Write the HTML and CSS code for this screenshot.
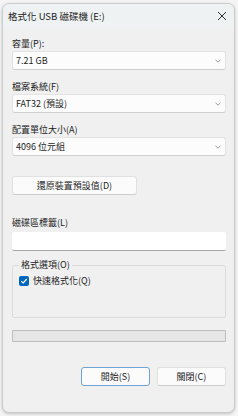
FILE: index.html
```html
<!DOCTYPE html>
<html>
  <head>
    <title>格式化 USB 磁碟機 (E:)</title>
    <link rel="stylesheet" href="styles.css">
  </head>
  <body>
    <div class="window">

      <div class="titlebar">
        <span class="title">格式化 USB 磁碟機 (E:)</span>
        <svg class="close" width="10" height="10" viewBox="0 0 10 10">
          <path d="M1 1 L9 9 M9 1 L1 9" stroke="#2b2b2b" stroke-width="1" fill="none"/>
        </svg>
      </div>

      <div class="content">

        <div class="field">
          <div class="label">容量(P):</div>
          <div class="combo">
            <span>7.21 GB</span>
            <svg class="chevron" width="6" height="4" viewBox="0 0 6 4"><path d="M0.5 0.8 L3 3.2 L5.5 0.8" stroke="#9a9a9a" fill="none"/></svg>
          </div>
        </div>

        <div class="field">
          <div class="label">檔案系統(F)</div>
          <div class="combo">
            <span>FAT32 (預設)</span>
            <svg class="chevron" width="6" height="4" viewBox="0 0 6 4"><path d="M0.5 0.8 L3 3.2 L5.5 0.8" stroke="#9a9a9a" fill="none"/></svg>
          </div>
        </div>

        <div class="field">
          <div class="label">配置單位大小(A)</div>
          <div class="combo">
            <span>4096 位元組</span>
            <svg class="chevron" width="6" height="4" viewBox="0 0 6 4"><path d="M0.5 0.8 L3 3.2 L5.5 0.8" stroke="#9a9a9a" fill="none"/></svg>
          </div>
        </div>

        <button class="btn btn-restore">還原裝置預設值(D)</button>

        <div class="field field-volume">
          <div class="label">磁碟區標籤(L)</div>
          <div class="textbox"></div>
        </div>

        <fieldset class="group">
          <legend>格式選項(O)</legend>
          <label class="check">
            <span class="box">
              <svg width="8" height="8" viewBox="0 0 8 8"><path d="M1.3 4.2 L3.2 6 L6.8 2" stroke="white" stroke-width="1.2" fill="none"/></svg>
            </span>
            快速格式化(Q)
          </label>
        </fieldset>

        <div class="progress"></div>

        <div class="actions">
          <button class="btn btn-default">開始(S)</button>
          <button class="btn">關閉(C)</button>
        </div>

      </div>
    </div>
  </body>
</html>
```

FILE: styles.css
```css
body {
  margin: 0;
  background-color: #f4f4f4;
  font-family: "Noto Sans CJK TC", "Noto Sans", sans-serif;
  font-size: 9px;
  color: #1c1c1c;
}

.window {
  box-sizing: border-box;
  width: 233px;
  height: 410px;
  margin: 3px 2px;
  border: 1px solid #cbcbcb;
  border-radius: 7px;
  background-color: #f0f0f0;
  box-shadow: 0 1px 3px rgba(0, 0, 0, 0.2);
  overflow: hidden;
}

.titlebar {
  height: 23px;
  display: flex;
  align-items: center;
  justify-content: space-between;
  padding: 0 7px 0 5px;
  background-color: #eef2f2;
}

.title {
  font-size: 9.5px;
}

.content {
  padding: 10px 8px 0 9px;
}

.field {
  margin-top: 10px;
}
.field:first-child {
  margin-top: 0;
}

.label {
  line-height: 14px;
}

.combo {
  box-sizing: border-box;
  height: 19px;
  display: flex;
  align-items: center;
  justify-content: space-between;
  padding: 0 4px 0 3px;
  background-color: #fcfcfc;
  border: 1px solid #e3e3e3;
  border-bottom-color: #cfcfcf;
  border-radius: 3px;
}

.btn {
  box-sizing: border-box;
  height: 19px;
  padding: 0;
  font-family: inherit;
  font-size: 9px;
  color: #1c1c1c;
  background-color: #fbfbfb;
  border: 1px solid #e0e0e0;
  border-bottom-color: #cdcdcd;
  border-radius: 3px;
}

.btn-restore {
  display: block;
  width: 125px;
  margin-top: 20px;
}

.field-volume {
  margin-top: 21px;
}

.textbox {
  box-sizing: border-box;
  height: 19px;
  margin-top: 2px;
  background-color: #ffffff;
  border-bottom: 1px solid #a8a8a8;
  border-radius: 2px;
}

.group {
  box-sizing: border-box;
  height: 60px;
  margin: 7px 0 0 0;
  padding: 0 6px;
  border: 1px solid #dcdcdc;
  border-radius: 2px;
}

.group legend {
  padding: 0 2px;
  line-height: 14px;
}

.check {
  display: flex;
  align-items: center;
  gap: 4px;
  margin-top: 2px;
}

.box {
  width: 10px;
  height: 10px;
  display: flex;
  align-items: center;
  justify-content: center;
  background-color: #0067c0;
  border-radius: 2px;
}

.progress {
  box-sizing: border-box;
  height: 12px;
  margin-top: 12px;
  background-color: #e6e6e6;
  border: 1px solid #bcbcbc;
  border-radius: 1px;
}

.actions {
  display: flex;
  justify-content: flex-end;
  gap: 7px;
  margin-top: 25px;
}

.actions .btn {
  width: 69px;
}

.btn-default {
  border-color: #6ea3d4;
}
```
